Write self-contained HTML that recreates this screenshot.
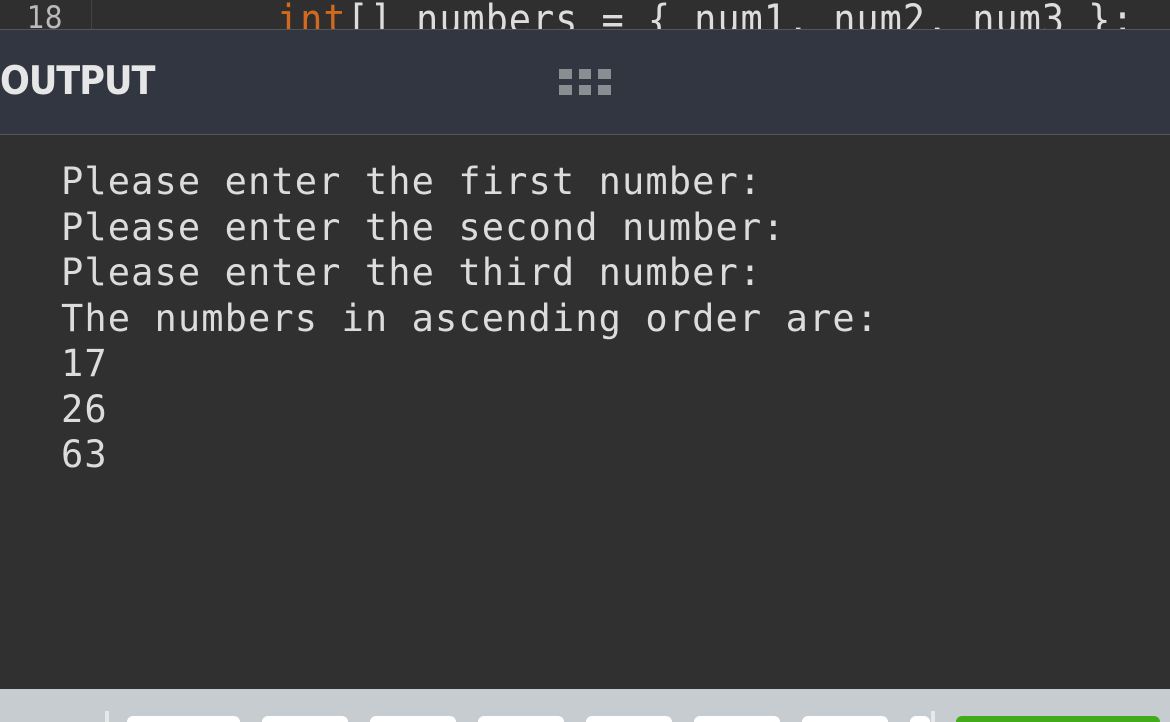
<!DOCTYPE html>
<html style="margin:0;width:1170px;height:722px;overflow:hidden"><head><meta charset="utf-8"><style>
body{margin:0;width:1170px;height:722px;overflow:hidden;background:#303030;position:relative;font-family:"DejaVu Sans Mono","Liberation Mono",monospace}
.code{position:absolute;left:0;top:0;width:1170px;height:29px;background:#2f2f2f;overflow:hidden}
.gut{position:absolute;left:91px;top:0;width:1px;height:29px;background:#444}
.ln{position:absolute;left:27px;top:0px;color:#bbb;font-size:31px;font-family:"DejaVu Sans Condensed","DejaVu Sans",sans-serif}
.cl{position:absolute;left:277px;top:-4px;color:#ddd;font-size:37px;letter-spacing:0.9px;font-family:"DejaVu Sans Mono",monospace;white-space:pre;transform:scaleY(1.1);transform-origin:0 0}
.hdr{position:absolute;left:0;top:29px;width:1170px;height:104px;background:#323640;border-top:1px solid #555;border-bottom:1px solid #555}
.title{position:absolute;left:0;top:29px;color:#e6e6e6;font-size:39px;font-weight:bold;font-family:"DejaVu Sans Condensed","Liberation Sans",sans-serif;letter-spacing:-1px}
.out{position:absolute;left:61px;top:159px;color:#dcdcdc;font-size:37px;line-height:45.5px;letter-spacing:1.1px;white-space:pre}
.bar{position:absolute;left:0;top:689px;width:1170px;height:33px;background:#c7ccd0}
.k{position:absolute;top:716px;height:6px;background:#fff;border-radius:10px 10px 0 0}
</style></head><body>
<div class="code"><div class="gut"></div><div class="ln">18</div><div class="cl"><span style="color:#d2691e">int</span>[] numbers = { num1, num2, num3 };</div></div>
<div class="hdr"><div class="title">OUTPUT</div>
<svg style="position:absolute;left:559px;top:39px" width="52" height="27"><g fill="#8a8d92"><rect x="0" y="0" width="13" height="10"/><rect x="20" y="0" width="12" height="10"/><rect x="39" y="0" width="13" height="10"/><rect x="0" y="16" width="13" height="10"/><rect x="20" y="16" width="12" height="10"/><rect x="39" y="16" width="13" height="10"/></g></svg>
</div>
<div class="out">Please enter the first number:
Please enter the second number:
Please enter the third number:
The numbers in ascending order are:
17
26
63</div>
<div class="bar"></div>
<div style="position:absolute;left:105px;top:711px;width:4px;height:11px;background:#e8e8e8"></div>
<div style="position:absolute;left:931px;top:711px;width:4px;height:11px;background:#e8e8e8"></div>
<div class="k" style="left:127px;width:113px"></div>
<div class="k" style="left:262px;width:86px"></div>
<div class="k" style="left:370px;width:86px"></div>
<div class="k" style="left:478px;width:86px"></div>
<div class="k" style="left:586px;width:86px"></div>
<div class="k" style="left:694px;width:86px"></div>
<div class="k" style="left:802px;width:86px"></div>
<div class="k" style="left:910px;width:20px"></div>
<div class="k" style="left:956px;width:204px;background:#41ab1b"></div>
</body></html>
